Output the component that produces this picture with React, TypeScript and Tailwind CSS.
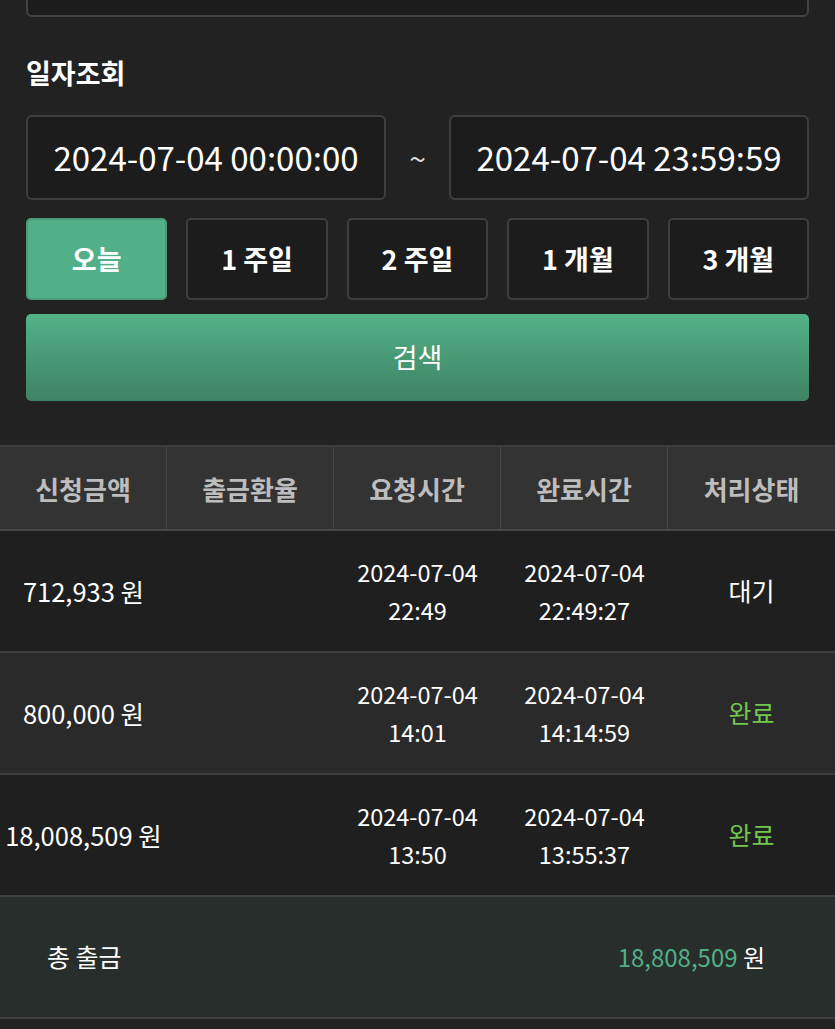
import React from "react";

const font = { fontFamily: '"Noto Sans CJK KR", "Noto Sans", sans-serif' };

const rows = [
  { amount: "712,933 원", req: ["2024-07-04", "22:49"], done: ["2024-07-04", "22:49:27"], status: "대기", ok: false, bg: "bg-[#1f1f1f]" },
  { amount: "800,000 원", req: ["2024-07-04", "14:01"], done: ["2024-07-04", "14:14:59"], status: "완료", ok: true, bg: "bg-[#2a2a2a]" },
  { amount: "18,008,509 원", req: ["2024-07-04", "13:50"], done: ["2024-07-04", "13:55:37"], status: "완료", ok: true, bg: "bg-[#1f1f1f]" },
];

export default function App() {
  return (
    <div className="w-[835px] h-[1029px] overflow-hidden bg-[#222222] text-white" style={font}>
      <div className="px-[26px]">
        <div className="-mt-[41px] h-[58px] rounded-[6px] border-2 border-[#424242] bg-[#1c1c1c]"></div>
        <h2 className="mt-[38px] text-[27px] font-bold leading-[36px]">일자조회</h2>
        <div className="mt-[24px] flex items-center">
          <div className="w-[360px] h-[85px] flex items-center justify-center rounded-[6px] border-2 border-[#3e3e3e] bg-[#1c1c1c] text-[33px]">
            2024-07-04 00:00:00
          </div>
          <div className="flex-1 text-center text-[30px] text-[#dddddd]">~</div>
          <div className="w-[360px] h-[85px] flex items-center justify-center rounded-[6px] border-2 border-[#3e3e3e] bg-[#1c1c1c] text-[33px]">
            2024-07-04 23:59:59
          </div>
        </div>
        <div className="mt-[18px] grid grid-cols-5 gap-[19px]">
          {["오늘", "1 주일", "2 주일", "1 개월", "3 개월"].map((t, i) => (
            <div
              key={t}
              className={
                i === 0
                  ? "h-[82px] flex items-center justify-center rounded-[5px] border-2 border-[#4a9c78] bg-[#52b088] text-[27px] font-bold"
                  : "h-[82px] flex items-center justify-center rounded-[5px] border-2 border-[#3e3e3e] bg-[#1c1c1c] text-[27px] font-bold"
              }
            >
              {t}
            </div>
          ))}
        </div>
        <div className="mt-[14px] h-[87px] flex items-center justify-center rounded-[5px] bg-gradient-to-b from-[#53b288] to-[#3e8264] text-[27px]">
          검색
        </div>
      </div>
      <div className="mt-[44px] border-t-2 border-[#3c3c3c]">
        <div className="grid grid-cols-5 h-[84px] bg-[#333333] border-b-2 border-[#474747]">
          {["신청금액", "출금환율", "요청시간", "완료시간", "처리상태"].map((t, i) => (
            <div
              key={t}
              className={
                i < 4
                  ? "flex items-center justify-center border-r border-[#474747] text-[26px] font-bold text-[#bdbdbd]"
                  : "flex items-center justify-center text-[26px] font-bold text-[#bdbdbd]"
              }
            >
              {t}
            </div>
          ))}
        </div>
        {rows.map((r, i) => (
          <div key={i} className={`grid grid-cols-5 h-[122px] border-b-2 border-[#3f3f3f] ${r.bg}`}>
            <div className="flex items-center justify-center text-[25.5px] whitespace-nowrap">{r.amount}</div>
            <div></div>
            <div className="flex flex-col items-center justify-center text-[23.5px] leading-[38px]">
              <span>{r.req[0]}</span>
              <span>{r.req[1]}</span>
            </div>
            <div className="flex flex-col items-center justify-center text-[23.5px] leading-[38px]">
              <span>{r.done[0]}</span>
              <span>{r.done[1]}</span>
            </div>
            <div className={r.ok ? "flex items-center justify-center text-[25px] text-[#72c74e]" : "flex items-center justify-center text-[25px]"}>
              {r.status}
            </div>
          </div>
        ))}
        <div className="h-[122px] flex items-center justify-between bg-[#272e2c] border-b-2 border-[#3f3f3f] pl-[47px] pr-[70px]">
          <span className="text-[25px]">총 출금</span>
          <span className="text-[24px]">
            <span className="text-[#52b088]">18,808,509</span> 원
          </span>
        </div>
      </div>
    </div>
  );
}
